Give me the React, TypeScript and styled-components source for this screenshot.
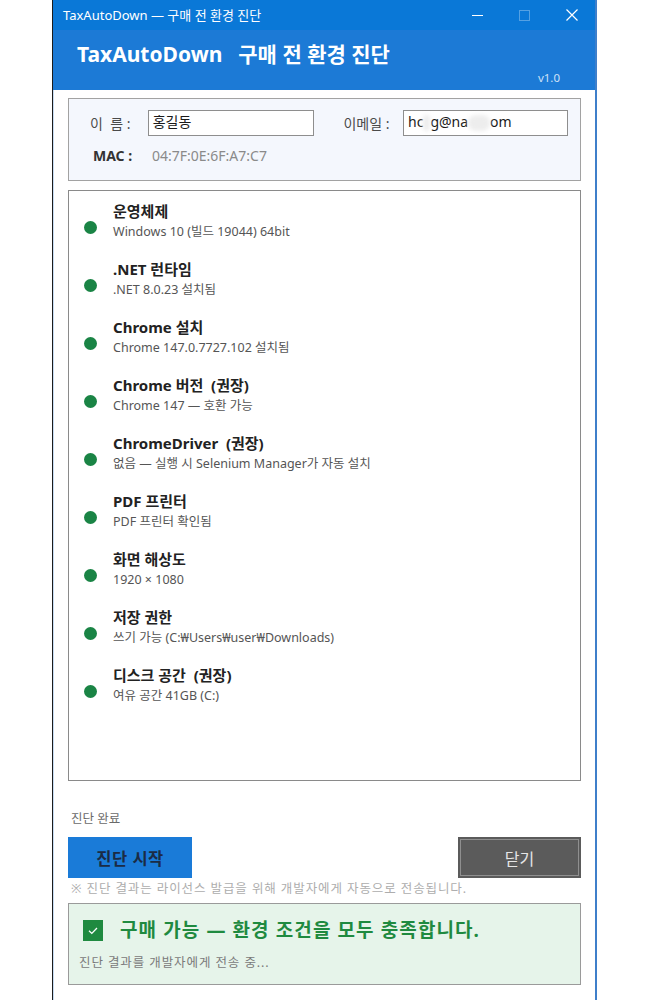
import React from "react";
import styled, { createGlobalStyle } from "styled-components";

const GlobalStyle = createGlobalStyle`
  html, body {
    margin: 0;
    padding: 0;
    background: #ffffff;
  }
  body {
    font-family: "Noto Sans", "Noto Sans CJK KR", sans-serif;
  }
  * { box-sizing: border-box; }
`;

const Page = styled.div`
  width: 653px;
  height: 1000px;
  padding-left: 52px;
  overflow: hidden;
`;

const Window = styled.div`
  width: 545px;
  height: 1000px;
  display: flex;
  flex-direction: column;
  border-left: 1px solid #1c1c1c;
  border-right: 2px solid #3f7fca;
  background: #ffffff;
`;

const TitleBar = styled.div`
  height: 30px;
  background: #0a78d7;
  display: flex;
  align-items: center;
  padding-left: 10px;
  color: #ffffff;
  font-size: 13px;
`;

const TitleText = styled.div`
  flex: 1;
  line-height: 30px;
  white-space: nowrap;
`;

const CtrlButton = styled.div<{ $dim?: boolean }>`
  width: 47px;
  height: 30px;
  display: flex;
  align-items: center;
  justify-content: center;
  opacity: ${(p) => (p.$dim ? 0.3 : 1)};
`;

const Header = styled.div`
  height: 60px;
  background: #1c7ad6;
  position: relative;
  padding: 9px 0 0 24px;
`;

const HeaderTitle = styled.div`
  display: flex;
  gap: 16px;
  color: #ffffff;
  font-weight: 700;
  font-size: 21px;
  line-height: 30px;
  white-space: pre;
`;

const Version = styled.div`
  position: absolute;
  right: 35px;
  bottom: 5px;
  color: #cfe1f6;
  font-size: 11.5px;
  line-height: 14px;
`;

const Body = styled.div`
  flex: 1;
  padding: 8px 14px 0 14px;
  display: flex;
  flex-direction: column;
  border-left: 1px solid #c7dcf3;
`;

const InfoBox = styled.div`
  height: 83px;
  background: #f4f7fd;
  border: 1px solid #a2a2a2;
  padding: 11px 12px 0 21px;
  display: flex;
  flex-direction: column;
  gap: 11px;
`;

const FieldRow = styled.div`
  display: flex;
  align-items: center;
  height: 26px;
`;

const FieldLabel = styled.div<{ $w: number }>`
  width: ${(p) => p.$w}px;
  font-size: 14px;
  color: #4a4a4a;
  white-space: pre;
`;

const TextInput = styled.div<{ $w: number }>`
  width: ${(p) => p.$w}px;
  height: 26px;
  background: #ffffff;
  border: 1px solid #8e8e8e;
  padding: 0 4px;
  font-size: 14px;
  line-height: 21px;
  color: #1a1a1a;
  display: flex;
  align-items: flex-start;
  white-space: pre;
`;

const Smudge = styled.span<{ $w: number }>`
  display: inline-block;
  width: ${(p) => p.$w}px;
  height: 16px;
  margin-top: 4px;
  border-radius: 8px;
  background: #ededed;
  filter: blur(2px);
`;

const MacRow = styled.div`
  display: flex;
  align-items: center;
  padding-left: 3px;
  font-size: 14px;
  line-height: 18px;
`;

const MacLabel = styled.div`
  width: 59px;
  font-weight: 700;
  color: #333333;
`;

const MacValue = styled.div`
  color: #8a8a8a;
`;

const CheckList = styled.div`
  margin-top: 9px;
  height: 591px;
  border: 1px solid #8a8a8a;
  background: #ffffff;
  padding: 10px 0 0 15px;
  display: flex;
  flex-direction: column;
  gap: 18px;
`;

const CheckItem = styled.div`
  display: flex;
  align-items: flex-start;
`;

const Dot = styled.div<{ $color: string }>`
  width: 13px;
  height: 13px;
  border-radius: 50%;
  background: ${(p) => p.$color};
  margin: 20px 16px 0 0;
  flex: none;
`;

const ItemText = styled.div`
  display: flex;
  flex-direction: column;
  gap: 2px;
`;

const ItemTitle = styled.div`
  font-size: 15px;
  font-weight: 700;
  line-height: 20px;
  color: #222222;
  white-space: pre;
`;

const ItemDetail = styled.div`
  font-size: 12.5px;
  line-height: 18px;
  color: #555555;
  white-space: pre;
`;

const StatusLine = styled.div`
  margin-top: 30px;
  font-size: 12.5px;
  line-height: 16px;
  color: #6a6a6a;
  padding-left: 3px;
`;

const ButtonRow = styled.div`
  margin-top: 10px;
  display: flex;
  justify-content: space-between;
`;

const PrimaryButton = styled.div`
  width: 124px;
  height: 41px;
  background: #1a7bd8;
  color: #1b2b45;
  font-size: 16.5px;
  font-weight: 700;
  letter-spacing: 0.5px;
  display: flex;
  align-items: center;
  justify-content: center;
`;

const CloseButton = styled.div`
  width: 123px;
  height: 41px;
  background: #5b5b5b;
  border: 2px solid #5b5b5b;
  outline: 1px solid #8f8f8f;
  outline-offset: -3px;
  color: #e6e6e6;
  font-size: 16px;
  display: flex;
  align-items: center;
  justify-content: center;
`;

const Note = styled.div`
  margin-top: 3px;
  font-size: 12.5px;
  line-height: 16px;
  letter-spacing: 0.9px;
  color: #adadad;
  padding-left: 3px;
  white-space: pre;
`;

const ResultBox = styled.div`
  margin-top: 6px;
  height: 82px;
  background: #e6f4ea;
  border: 1px solid #9a9a9a;
  padding: 14px 0 0 14px;
  display: flex;
  flex-direction: column;
  gap: 13px;
`;

const ResultHead = styled.div`
  display: flex;
  align-items: center;
  gap: 17px;
`;

const ResultTitle = styled.div`
  font-size: 19px;
  font-weight: 700;
  color: #1f8a40;
  line-height: 24px;
  letter-spacing: 1.1px;
  white-space: pre;
`;

const ResultSub = styled.div`
  font-size: 12.5px;
  line-height: 16px;
  letter-spacing: 0.9px;
  color: #7a7a7a;
  margin-left: -4px;
`;

type Check = { title: string; detail: string };

const checks: Check[] = [
  { title: "운영체제", detail: "Windows 10 (빌드 19044) 64bit" },
  { title: ".NET 런타임", detail: ".NET 8.0.23 설치됨" },
  { title: "Chrome 설치", detail: "Chrome 147.0.7727.102 설치됨" },
  { title: "Chrome 버전  (권장)", detail: "Chrome 147 — 호환 가능" },
  { title: "ChromeDriver  (권장)", detail: "없음 — 실행 시 Selenium Manager가 자동 설치" },
  { title: "PDF 프린터", detail: "PDF 프린터 확인됨" },
  { title: "화면 해상도", detail: "1920 × 1080" },
  { title: "저장 권한", detail: "쓰기 가능 (C:₩Users₩user₩Downloads)" },
  { title: "디스크 공간  (권장)", detail: "여유 공간 41GB (C:)" },
];

const CheckIcon = () => (
  <svg width="20" height="21" viewBox="0 0 20 21">
    <rect x="0" y="0" width="20" height="21" fill="#1f8a40" />
    <path d="M6 10.8 L8.8 13.4 L14 8" fill="none" stroke="#ffffff" strokeWidth="1.3" />
  </svg>
);

export default function App() {
  return (
    <>
      <GlobalStyle />
      <Page>
        <Window>
          <TitleBar>
            <TitleText>TaxAutoDown — 구매 전 환경 진단</TitleText>
            <CtrlButton>
              <svg width="11" height="11" viewBox="0 0 11 11">
                <line x1="0" y1="5.5" x2="11" y2="5.5" stroke="#ffffff" strokeWidth="1" />
              </svg>
            </CtrlButton>
            <CtrlButton $dim>
              <svg width="11" height="11" viewBox="0 0 11 11">
                <rect x="0.5" y="0.5" width="10" height="10" fill="none" stroke="#ffffff" strokeWidth="1" />
              </svg>
            </CtrlButton>
            <CtrlButton>
              <svg width="12" height="12" viewBox="0 0 12 12">
                <path d="M0.5 0.5 L11.5 11.5 M11.5 0.5 L0.5 11.5" stroke="#ffffff" strokeWidth="1.2" />
              </svg>
            </CtrlButton>
          </TitleBar>
          <Header>
            <HeaderTitle>
              <span>TaxAutoDown</span>
              <span>구매 전 환경 진단</span>
            </HeaderTitle>
            <Version>v1.0</Version>
          </Header>
          <Body>
            <InfoBox>
              <FieldRow>
                <FieldLabel $w={58}>{"이  름 :"}</FieldLabel>
                <TextInput $w={167}>홍길동</TextInput>
                <FieldLabel $w={30}>{""}</FieldLabel>
                <FieldLabel $w={60}>{"이메일 :"}</FieldLabel>
                <TextInput $w={166}>
                  {"hc"}
                  <Smudge $w={7} />
                  {"g@na"}
                  <Smudge $w={22} />
                  {"om"}
                </TextInput>
              </FieldRow>
              <MacRow>
                <MacLabel>MAC :</MacLabel>
                <MacValue>04:7F:0E:6F:A7:C7</MacValue>
              </MacRow>
            </InfoBox>
            <CheckList>
              {checks.map((c) => (
                <CheckItem key={c.title}>
                  <Dot $color="#1a8445" />
                  <ItemText>
                    <ItemTitle>{c.title}</ItemTitle>
                    <ItemDetail>{c.detail}</ItemDetail>
                  </ItemText>
                </CheckItem>
              ))}
            </CheckList>
            <StatusLine>진단 완료</StatusLine>
            <ButtonRow>
              <PrimaryButton>진단 시작</PrimaryButton>
              <CloseButton>닫기</CloseButton>
            </ButtonRow>
            <Note>{"※ 진단 결과는 라이선스 발급을 위해 개발자에게 자동으로 전송됩니다."}</Note>
            <ResultBox>
              <ResultHead>
                <CheckIcon />
                <ResultTitle>{"구매 가능 — 환경 조건을 모두 충족합니다."}</ResultTitle>
              </ResultHead>
              <ResultSub>진단 결과를 개발자에게 전송 중...</ResultSub>
            </ResultBox>
          </Body>
        </Window>
      </Page>
    </>
  );
}
